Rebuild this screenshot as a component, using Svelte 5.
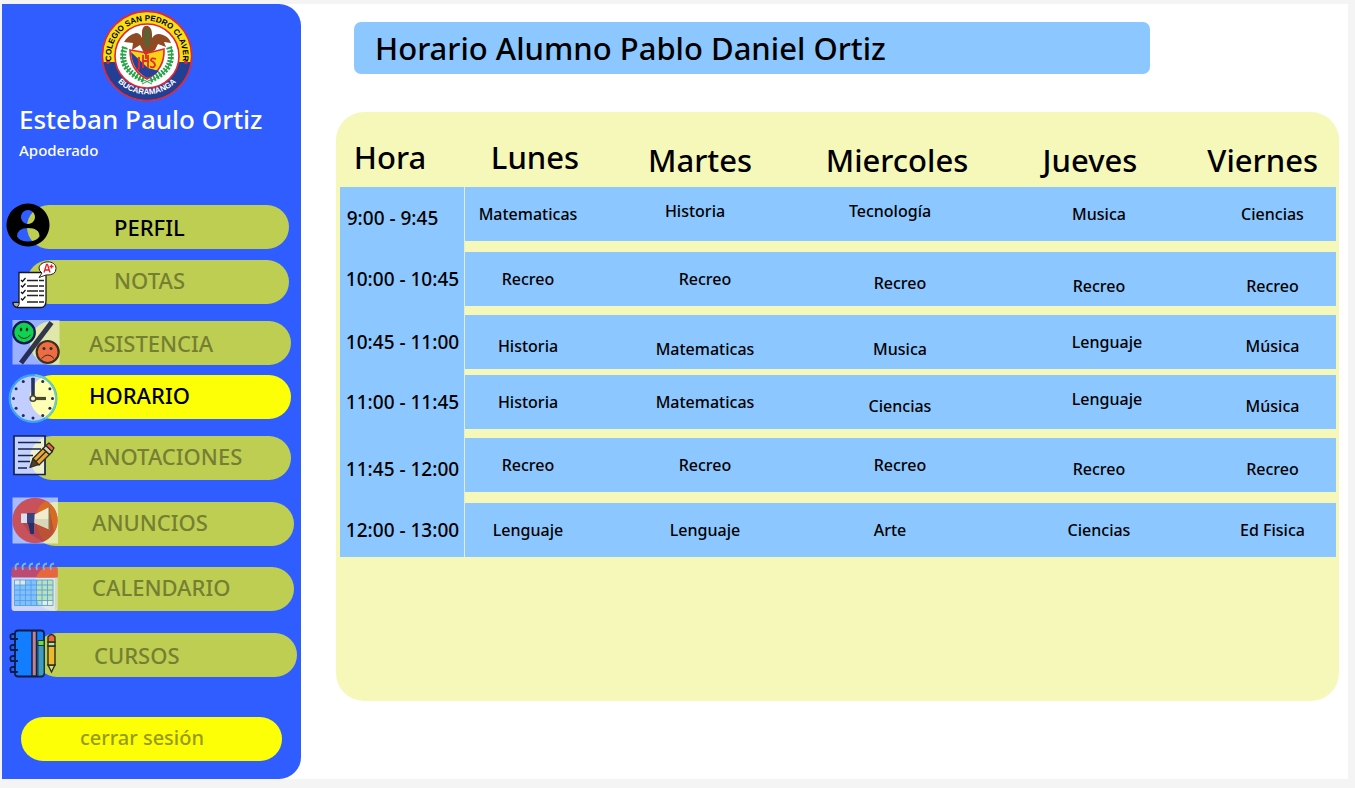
<script>
  const menu = [
    { id: 'perfil', label: 'PERFIL', shift: 'a', gap: 0, text: 'far', tone: 'dark' },
    { id: 'notas', label: 'NOTAS', shift: 'a', gap: 11, text: 'far up', tone: 'muted' },
    { id: 'asistencia', label: 'ASISTENCIA', shift: 'b', gap: 17, text: '', tone: 'muted' },
    { id: 'horario', label: 'HORARIO', shift: 'b', gap: 10, text: 'up', tone: 'active' },
    { id: 'anotaciones', label: 'ANOTACIONES', shift: 'b', gap: 17, text: 'up', tone: 'muted' },
    { id: 'anuncios', label: 'ANUNCIOS', shift: 'c', gap: 22, text: 'up', tone: 'muted' },
    { id: 'calendario', label: 'CALENDARIO', shift: 'c', gap: 21, text: 'up', tone: 'muted' },
    { id: 'cursos', label: 'CURSOS', shift: 'd', gap: 22, text: '', tone: 'muted' },
  ];

  const days = ['Lunes', 'Martes', 'Miercoles', 'Jueves', 'Viernes'];

  // Each cell is [subject, placement].
  const rows = [
    { time: '9:00 - 9:45', place: 'left low', gap: 11, cells: [['Matematicas', ''], ['Historia', 'left high'], ['Tecnología', 'left high'], ['Musica', ''], ['Ciencias', '']] },
    { time: '10:00 - 10:45', place: '', gap: 9, cells: [['Recreo', ''], ['Recreo', ''], ['Recreo', 'low'], ['Recreo', 'bottom'], ['Recreo', 'bottom']] },
    { time: '10:45 - 11:00', place: 'high', gap: 6, cells: [['Historia', 'low'], ['Matematicas', 'bottom'], ['Musica', 'bottom'], ['Lenguaje', 'right'], ['Música', 'low']] },
    { time: '11:00 - 11:45', place: '', gap: 9, cells: [['Historia', ''], ['Matematicas', ''], ['Ciencias', 'low'], ['Lenguaje', 'right high'], ['Música', 'low']] },
    { time: '11:45 - 12:00', place: 'low', gap: 11, cells: [['Recreo', ''], ['Recreo', ''], ['Recreo', ''], ['Recreo', 'low'], ['Recreo', 'low']] },
    { time: '12:00 - 13:00', place: '', gap: 0, cells: [['Lenguaje', ''], ['Lenguaje', ''], ['Arte', 'left'], ['Ciencias', ''], ['Ed Fisica', '']] },
  ];

  const hours = Array.from({ length: 12 }, (_, i) => (i * Math.PI) / 6);
  const rings = [14, 21, 28, 35, 42, 49];
</script>

<div class="page">
  <aside>
    <svg class="crest" viewBox="0 0 92 92" role="img" aria-label="Colegio San Pedro Claver">
      <defs>
        <path id="arc-top" d="M12.5 60 A36 36 0 1 1 79.5 60" />
        <path id="arc-bottom" d="M9 61 A41 41 0 0 0 83 61" />
      </defs>
      <circle cx="46" cy="46" r="45" fill="#fadf12" />
      <path d="M1.5 52 A45 45 0 0 0 90.5 52 Z" fill="#233f94" />
      <circle cx="46" cy="46" r="44.6" fill="none" stroke="#e12638" stroke-width="1.6" />
      <circle cx="46" cy="46" r="32" fill="#fff" stroke="#e12638" stroke-width="1.6" />
      <circle cx="7" cy="52" r="2" fill="#e12638" /><circle cx="85" cy="52" r="2" fill="#e12638" />
      <text class="ring-top"><textPath href="#arc-top" startOffset="50%" text-anchor="middle">COLEGIO SAN PEDRO CLAVER</textPath></text>
      <text class="ring-bottom"><textPath href="#arc-bottom" startOffset="50%" text-anchor="middle">BUCARAMANGA</textPath></text>
      <g fill="none" stroke="#27a34a">
        <path d="M22 37 Q17 60 43 71 M70 37 Q75 60 49 71" stroke-width="1.2" />
        <path d="M24 37 Q16 59 43 70 M68 37 Q76 59 49 70" stroke-width="6" stroke-dasharray="2 1.4" />
        <path d="M43 70 l8 4 M49 70 l-8 4" stroke-width="1" />
      </g>
      <path d="M23 32 Q27 25 35 23 Q39 23 41 28 L41 21 Q42 15 47 16 Q51 18 51 24 L51 28 Q55 22 62 25 Q68 27 70 33 L63 32 L65 37 L57 34 L54 40 L49 43 L43 43 L39 35 L31 40 L32 33 Z" fill="#8f4a24" />
      <path d="M43 20 q4 -4 6 1 v15 h-5z" fill="#576235" />
      <path d="M29 40 L47 43 L63 39 Q64 59 46 69 Q29 61 29 40Z" fill="#f9d412" stroke="#e12638" stroke-width="1.6" />
      <path d="M30 42 L47 58 L58 61 Q53 66 46 68 Q31 60 30 42Z" fill="#28409a" />
      <path d="M38 47 v11 q0 2 -3 1 M42 45 v13 M47 45 v13 M42 51 h5 M45 41 v8 M43 43 h4 M55 49 q-5 -2 -5 1.5 q4 2 4 5 q-1 3 -5 1" fill="none" stroke="#e5252c" stroke-width="1.8" />
    </svg>
    <p class="name">Esteban Paulo Ortiz</p>
    <p class="role">Apoderado</p>

    <nav aria-label="Menú">
      {#each menu as item}
        <a
          href={'#' + item.id}
          class="pill {item.shift} {item.text} {item.tone}"
          style:margin-top="{item.gap}px"
          aria-current={item.tone === 'active' ? 'page' : undefined}
        >
          <svg class="icon" viewBox="0 0 60 60" aria-hidden="true">
            {#if item.id === 'perfil'}
              <path fill-rule="evenodd" d="M26 6.5a21.5 21.5 0 1 0 .01 0Z M26 13a7 7 0 1 1 -.01 0Z M15 39.5 Q15 31 26 31 Q37.5 31 37.5 39.5 Q34 44.5 26 44.5 Q18 44.5 15 39.5Z" />
            {:else if item.id === 'notas'}
              <path d="M17 20.5h27v28q0 7-5 7H16q-5 0-5-5h6Z" fill="#fff" stroke="#171717" stroke-width="1.3" />
              <path d="M11 50.5h6v2q-1 2.5-2.5 2.5q-3.5-.5-3.5-4.5Z" fill="#aaa" stroke="#171717" />
              <path d="M25 28.5h17M25 34h17M25 39h17M25 43.5h17M25 50h17" stroke="#222" stroke-width="1.3" stroke-dasharray="11 1 5 1" />
              <path d="M19 28l1.5 1.5 3-3.5M19 33.500l1.5 1.5 3-3.5M19 40l1.5 1.5 3-3.5M19 46.500l1.5 1.5 3-3.5" fill="none" stroke="#111" stroke-width="1.2" />
              <path d="M40 21l-3 4.5 7-2.5q10 .5 10-6.5c0-9-16-8.5-17-.5q0 3 3 5Z" fill="#fff" stroke="#222" />
              <path d="M42 20.5l2.500-8h1l2.500 8M43 18h4M49.5 12.500v4M47.500 14.500h4" fill="none" stroke="#ed1c24" stroke-width="1.3" />
            {:else if item.id === 'asistencia'}
              <path d="M10.5 7h47v44.5h-47z" fill="#fff" opacity=".52" />
              <path d="M19 50L49.5 9.5" stroke="#12183c" stroke-width="5" opacity=".85" />
              <g stroke="#101a50" stroke-width="2.2">
                <circle cx="22" cy="19.5" r="10.8" fill="#12d150" />
                <circle cx="45.7" cy="39" r="11" fill="#f06a43" stroke="#3a301c" />
              </g>
              <path d="M16 22q6 7 12.5 0M39.5 45.5q6.5-7 12.5 0" fill="none" stroke="#173b24" />
              <g fill="#173b24"><ellipse cx="19" cy="16.5" rx="1.2" ry="2" /><ellipse cx="25" cy="16.5" rx="1.2" ry="2" /><circle cx="42" cy="35.5" r="1.5" /><circle cx="49" cy="35.5" r="1.5" /></g>
            {:else if item.id === 'horario'}
              <circle cx="31" cy="31.5" r="23.3" fill="#fff" fill-opacity=".7" stroke="#3aa5ec" stroke-width="2.2" />
              <path d="M33 8.300a23.3 23.3 0 0 1 10 43" fill="none" stroke="#74ccb4" stroke-width="2" />
              <g fill="#222b5c">
                {#each hours as h}
                  <circle cx={31 + 19.5 * Math.sin(h)} cy={31.5 - 19.5 * Math.cos(h)} r="1.5" />
                {/each}
              </g>
              <path d="M31 11v18" stroke="#273462" stroke-width="3.6" />
              <path d="M33 31.5h11" stroke="#49482c" stroke-width="3.2" />
              <circle cx="31" cy="31.5" r="2.8" fill="#f4f4cc" stroke="#49482c" stroke-width="1.5" />
            {:else if item.id === 'anotaciones'}
              <path d="M12 8h31v38.5h-31z" fill="#fff" fill-opacity=".72" stroke="#14214e" stroke-width="1.7" />
              <path d="M16 14.5h23M16 21h23M16 27.5h15M16 33.5h12M16 40h9" stroke="#19244b" stroke-width="1.6" />
              <g stroke="#2c2c1d" stroke-width="1.3" stroke-linejoin="round">
                <path d="M28 39.5l3-9 6 6Z" fill="#4b402a" />
                <path d="M31 30.5L41 20.5l6.5 6L37 37Z" fill="#e8a63c" />
                <path d="M41 20.5l3-3 6.5 6-3 3Z" fill="#d5d5bd" />
                <path d="M44 17.5l3-2.5 5 5-2 3.5Z" fill="#ed6841" />
                <path d="M34 33.5l10-10" />
              </g>
            {:else if item.id === 'anuncios'}
              <path d="M10.5 3.5h45.5v46h-45.5z" fill="#fff" opacity=".58" />
              <circle cx="33" cy="26.5" r="22.7" fill="#c8525c" />
              <path d="M52 14a22.7 22.7 0 0 1-10 33Q30 31 36 15q4-7 9-8Q50 11 52 14Z" fill="#d96a24" />
              <path d="M20 28l8 12 13 8q7-3 11-11L47 14 33 30Z" fill="#a33d43" opacity=".55" />
              <path d="M19 19.5h7v9.5h-7z" fill="#dce0ec" />
              <path d="M25 19h8v10.5h-8z" fill="#3a4380" />
              <path d="M26 29h6v11h-3.5Z" fill="#25306b" />
              <path d="M32.5 20.5L47.5 13v22.5l-15-6.5Z" fill="#f0ecd0" />
              <path d="M32.5 25h15v10.5l-15-6.5Z" fill="#d9d7ba" />
              <path d="M46.5 13h1.5v22.5h-1.5z" fill="#8c7642" />
            {:else if item.id === 'calendario'}
              <path d="M9.5 17h46v32q0 3-3 3h-40q-3 0-3-3Z" fill="#e6eaff" opacity=".85" />
              <path d="M9.5 10q0-2 2-2h42q2 0 2 2v8.5h-46Z" fill="#bd4a72" />
              <path d="M34 18.5Q37 11 44 8h9.5q2 0 2 2v8.5Z" fill="#e7663b" />
              <path d="M53 18.5h2.5V48l-2.5 4Z" fill="#c7d6a2" opacity=".7" />
              <path d="M12.5 21h38.5v25.5h-38.5z" fill="#80c0ff" />
              <path d="M36 21h15v25.5H37q-6-13-1-25.5Z" fill="#b9e2ba" />
              <path d="M12.5 21h11v5h-11zM40 41.5h11v5h-11z" fill="#eef0dd" opacity=".85" />
              <path d="M12.5 21h38.5v25.5h-38.5zM18 21v25.5M23.5 21v25.5M29 21v25.5M34.5 21v25.5M40 21v25.5M45.5 21v25.5M12.5 26h38.5M12.5 31h38.5M12.5 36h38.5M12.5 41.5h38.5" fill="none" stroke="#4e9ae0" stroke-width=".8" />
              {#each rings as x}
                <path d="M{x} 11q-2-6 3-6.5" fill="none" stroke="#76b8ec" stroke-width="1.9" />
              {/each}
            {:else}
              <rect x="13" y="5.5" width="29" height="46" rx="3" fill="#127eff" stroke="#0d1d46" stroke-width="1.8" />
              <path d="M36 18h6v30q0 3-3 3h-3Z" fill="#3e9cc4" stroke="#173c43" />
              <path d="M30 6h4.5v45h-4.5z" fill="#c4818b" stroke="#172147" stroke-width="1.5" />
              <path d="M36 15.5h6v5h-6z" fill="#66df4e" stroke="#20391d" />
              <path d="M16 14H9q-2-5 2-5h3M16 25H9q-2-5 2-5h3M16 36H9q-2-5 2-5h3M16 47H9q-2-5 2-5h3" fill="none" stroke="#0d1d46" stroke-width="1.8" />
              <g stroke="#2b3018" stroke-width="1.4">
                <path d="M46 40l3.5 7 3.5-7Z" fill="#d7d99a" />
                <path d="M46 21h7v19h-7z" fill="#edb92d" />
                <path d="M46 17h7v4h-7z" fill="#b2e3b6" />
                <path d="M46 17v-5q3.500-5 7 0v5Z" fill="#ed6841" />
              </g>
            {/if}
          </svg>
          <span>{item.label}</span>
        </a>
      {/each}
    </nav>

    <button class="logout" type="button">cerrar sesión</button>
  </aside>

  <main>
    <h1>Horario Alumno Pablo Daniel Ortiz</h1>
    <section class="board">
      <table>
        <thead>
          <tr>
            <th scope="col">Hora</th>
            {#each days as day}
              <th scope="col">{day}</th>
            {/each}
          </tr>
        </thead>
        <tbody>
          {#each rows as row}
            <tr style:--gap="{row.gap}px">
              <th scope="row" class={row.place}>{row.time}</th>
              {#each row.cells as [subject, place]}
                <td class={place}>{subject}</td>
              {/each}
            </tr>
          {/each}
        </tbody>
      </table>
    </section>
  </main>
</div>

<style>
  :global(body) {
    margin: 0;
    background: #f4f4f4;
  }

  .page {
    --blue: #8cc8ff;
    --cream: #f6f8ba;
    display: flex;
    box-sizing: border-box;
    min-height: calc(100vh - 13px);
    margin: 4px 7px 9px 2px;
    background: #fff;
    color: #000;
    font-family: 'Noto Sans', 'Open Sans', sans-serif;
    font-weight: 500;
  }

  aside {
    display: flex;
    flex: 0 0 299px;
    flex-direction: column;
    box-sizing: border-box;
    padding: 6px 0 18px;
    border-radius: 0 22px 22px 0;
    background: #2f5dff;
  }

  .crest {
    width: 92px;
    height: 92px;
    margin-left: 99px;
  }

  .ring-top,
  .ring-bottom {
    font: bold 8px 'Liberation Sans Narrow', 'Liberation Sans', Arial, sans-serif;
  }

  .ring-bottom {
    fill: #fff;
  }

  .name,
  .role {
    margin: 0 0 0 17px;
    color: #fff;
  }

  .name {
    font-size: 26px;
    line-height: 34px;
  }

  .role {
    font-size: 15px;
    line-height: 28px;
  }

  nav {
    display: flex;
    flex-direction: column;
    margin-top: 41px;
  }

  .pill {
    position: relative;
    display: flex;
    align-items: center;
    box-sizing: border-box;
    height: 44px;
    margin-left: var(--start);
    margin-right: var(--end);
    padding-left: 59px;
    border-radius: 22px;
    background: #bece52;
    font-size: 22px;
    line-height: 24px;
    text-decoration: none;
  }

  .a { --start: 25px; --end: 12px; }
  .b { --start: 28px; --end: 10px; }
  .c { --start: 31px; --end: 7px; }
  .d { --start: 33px; --end: 4px; }

  .far {
    padding-left: 87px;
  }

  .up {
    padding-bottom: 4px;
  }

  .dark,
  .active {
    color: #000;
  }

  .muted {
    color: #757f32;
  }

  .active {
    background: #fcff05;
  }

  .icon {
    position: absolute;
    top: -8px;
    left: calc(-1 * var(--start));
    width: 60px;
    height: 60px;
  }

  .logout {
    height: 44px;
    margin: auto 19px 0;
    padding: 0 0 4px 59px;
    border: 0;
    border-radius: 22px;
    background: #fcff05;
    color: #979a18;
    font: inherit;
    font-size: 20px;
    text-align: left;
  }

  main {
    display: flex;
    flex: 1;
    flex-direction: column;
    min-width: 0;
    padding: 18px 9px 78px 35px;
  }

  h1 {
    margin: 0 189px 0 18px;
    padding: 4px 21px;
    border-radius: 7px;
    background: var(--blue);
    font-size: 31px;
    font-weight: 500;
    line-height: 44px;
  }

  .board {
    flex: 1;
    margin-top: 38px;
    padding: 0 3px 0 4px;
    border-radius: 28px;
    background: var(--cream);
  }

  table,
  thead,
  tbody {
    display: block;
  }

  tr {
    display: grid;
  }

  thead tr {
    grid-template-columns: 100fr 190fr 140fr 254fr 132fr 180fr;
    align-items: end;
    height: 75px;
  }

  thead th {
    padding: 0 0 8px;
    font-size: 31px;
    font-weight: 500;
    line-height: 38px;
  }

  thead th:nth-child(-n + 2) {
    padding-bottom: 11px;
  }

  thead th:last-child {
    padding-right: 18px;
    text-align: right;
  }

  tbody tr {
    grid-template-columns: 125fr 126fr 228fr 162fr 236fr 119fr;
    background: var(--blue);
  }

  tbody th,
  td {
    display: flex;
    align-items: center;
    justify-content: center;
    box-sizing: border-box;
    height: calc(54px + var(--gap));
    padding: 0;
    border-bottom: var(--gap) solid var(--cream);
    font-size: 16px;
    font-weight: 500;
    line-height: 20px;
  }

  tbody th {
    border-bottom-color: var(--blue);
    box-shadow: inset -1px 0 #e4efc8;
    font-size: 19px;
    white-space: nowrap;
  }

  tbody tr:not(:last-child) th {
    border-bottom: 0;
    padding-bottom: var(--gap);
  }

  td:last-child {
    padding-right: 8px;
  }

  td.left,
  th.left {
    padding-right: 20px;
  }

  .right {
    padding-left: 16px;
  }

  .high {
    padding-bottom: 6px;
  }

  .low {
    padding-top: 8px;
  }

  .bottom {
    padding-top: 14px;
  }
</style>
